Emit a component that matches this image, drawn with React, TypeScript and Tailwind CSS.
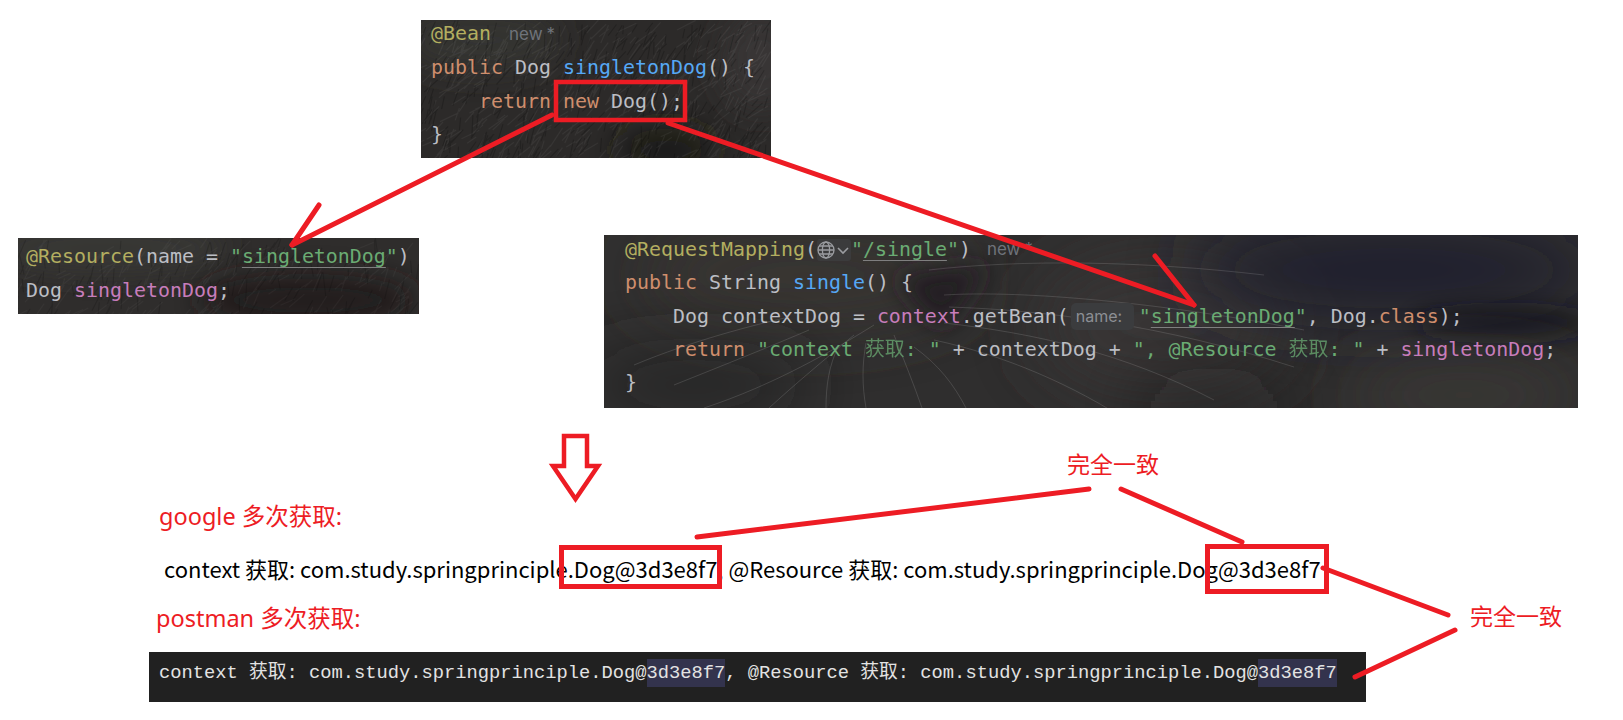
import React from 'react';

const RED = '#ed1c24';

// seeded so the fur looks the same on every load
const rng = (seed: number) => () => {
  seed = (seed * 16807) % 2147483647;
  return seed / 2147483647;
};

const Fur = ({ w, h, seed, count, angle, color, len = 16 }: { w: number; h: number; seed: number; count: number; angle: number; color: string; len?: number }) => {
  const r = rng(seed);
  const lines = Array.from({ length: count }, () => {
    const x = r() * w;
    const y = r() * h;
    const a = angle + (r() - 0.5) * 0.9;
    const l = len * (0.5 + r());
    return `M${x.toFixed(1)} ${y.toFixed(1)}l${(Math.cos(a) * l).toFixed(1)} ${(Math.sin(a) * l).toFixed(1)}`;
  });
  return <path d={lines.join('')} stroke={color} strokeWidth="1.2" fill="none" filter="url(#soft)" />;
};

const Blur = ({ id, amount }: { id: string; amount: number }) => (
  <filter id={id} filterUnits="userSpaceOnUse" x="-300" y="-300" width="1600" height="800">
    <feGaussianBlur stdDeviation={amount} />
  </filter>
);

const PanelOneBg = () => (
  <svg className="absolute inset-0 w-full h-full" viewBox="0 0 350 138" preserveAspectRatio="none">
    <defs><Blur id="b1" amount={16} /><Blur id="soft" amount={0.6} /></defs>
    <ellipse cx="245" cy="130" rx="50" ry="22" fill="#1c1a19" filter="url(#b1)" />
    <ellipse cx="340" cy="40" rx="40" ry="50" fill="#383634" filter="url(#b1)" />
    <ellipse cx="60" cy="20" rx="80" ry="30" fill="#363432" filter="url(#b1)" />
    <Fur w={350} h={138} seed={11} count={420} angle={2.3} color="rgba(255,255,255,0.05)" />
    <Fur w={350} h={138} seed={29} count={300} angle={2.0} color="rgba(0,0,0,0.2)" />
  </svg>
);

const PanelTwoBg = () => (
  <svg className="absolute inset-0 w-full h-full" viewBox="0 0 401 76" preserveAspectRatio="none">
    <defs><Blur id="b2" amount={14} /></defs>
    <ellipse cx="90" cy="10" rx="120" ry="24" fill="#393735" filter="url(#b2)" />
    <ellipse cx="290" cy="62" rx="110" ry="26" fill="#211f1e" filter="url(#b2)" />
    <Fur w={401} h={76} seed={47} count={170} angle={2.3} color="rgba(255,255,255,0.035)" />
    <Fur w={401} h={76} seed={83} count={110} angle={1.8} color="rgba(0,0,0,0.16)" />
  </svg>
);

const whiskers = [
  'M340 60C420 55 560 68 700 95',
  'M345 72C440 75 560 90 690 132',
  'M340 88C430 98 520 118 610 165',
  'M330 105C400 120 470 150 530 190',
  'M325 35C420 24 540 26 660 40',
  'M270 90C230 115 170 150 100 173',
  'M250 100C220 125 190 150 165 173',
  'M235 110C225 130 222 150 222 173',
  'M262 108C258 130 258 150 262 173',
  'M290 100C300 125 310 150 318 173',
  'M205 95C170 110 120 130 70 150',
  'M185 82C150 90 90 105 30 130',
  'M310 112C335 130 350 150 362 173',
];

const PanelThreeBg = () => (
  <svg className="absolute inset-0 w-full h-full" viewBox="0 0 974 173" preserveAspectRatio="none">
    <defs>
      <Blur id="b3" amount={34} />
      <Blur id="b3s" amount={12} />
    </defs>
    <ellipse cx="200" cy="40" rx="170" ry="50" fill="#383533" filter="url(#b3)" />
    <ellipse cx="560" cy="90" rx="130" ry="70" fill="#383634" filter="url(#b3)" />
    <ellipse cx="790" cy="35" rx="210" ry="50" fill="#20232d" filter="url(#b3)" />
    <ellipse cx="900" cy="88" rx="90" ry="12" fill="#18181a" filter="url(#b3s)" />
    <ellipse cx="860" cy="160" rx="120" ry="26" fill="#3d3a37" filter="url(#b3)" />
    <ellipse cx="610" cy="172" rx="80" ry="14" fill="#1e1d1e" filter="url(#b3)" />
    <ellipse cx="90" cy="150" rx="120" ry="30" fill="#252526" filter="url(#b3)" />
    <path d="M290 42L385 30L345 86L335 90Z" fill="#211f20" filter="url(#b3s)" />
    {whiskers.map((d) => (
      <path key={d} d={d} stroke="rgba(255,255,255,0.13)" strokeWidth="1" fill="none" />
    ))}
  </svg>
);

// jetbrains style editor colours
const A = ({ children }: { children: React.ReactNode }) => <span className="text-[#b3ae60]">{children}</span>;
const K = ({ children }: { children: React.ReactNode }) => <span className="text-[#cf8e6d]">{children}</span>;
const F = ({ children }: { children: React.ReactNode }) => <span className="text-[#56a8f5]">{children}</span>;
const S = ({ children }: { children: React.ReactNode }) => <span className="text-[#6aab73]">{children}</span>;
const V = ({ children }: { children: React.ReactNode }) => <span className="text-[#c77dbb]">{children}</span>;
const Cjk = ({ children }: { children: React.ReactNode }) => <span className="opacity-75">{children}</span>;
const U = ({ children }: { children: React.ReactNode }) => (
  <span className="underline decoration-[#7f7f7f] decoration-1 underline-offset-[4px] [text-decoration-skip-ink:none]">{children}</span>
);
const Hint = ({ children, className }: { children: React.ReactNode; className: string }) => (
  <span className={`font-['Inter',sans-serif] text-[#6f737a] text-[17px] ${className}`}>{children}</span>
);

const codeFont = "font-['DejaVu_Sans_Mono','Noto_Sans_CJK_SC',monospace] text-[19.930px] leading-[33.3px] text-[#bcbec4] whitespace-pre [font-variant-ligatures:none]";

const Highlight = ({ children }: { children: React.ReactNode }) => (
  <span className="inline-block bg-[#33334d] leading-[28px]">{children}</span>
);

const Overlay = () => (
  <svg className="absolute inset-0 pointer-events-none" width="1623" height="720" viewBox="0 0 1623 720" fill="none" stroke={RED} strokeLinecap="round">
    <rect x="556" y="82" width="129" height="38" strokeWidth="4.500" />
    <g strokeWidth="5">
      <rect x="561.500" y="547.500" width="158" height="39" />
      <rect x="1207.500" y="546.500" width="119" height="45" />
      <path d="M552 115L292 245" />
      <path d="M319 205L292 245" />
      <path d="M668 123L1194 305" />
      <path d="M1155 256L1194 305" />
      <path d="M1089 489L697 537" />
      <path d="M1121 489L1242 542" />
      <path d="M1323 568L1448 615" />
      <path d="M1455 630L1355 677" />
    </g>
    <path d="M564 436H587V466H598L575.500 499L553 466H564Z" strokeWidth="4.500" strokeLinecap="butt" fill="#fff" />
  </svg>
);

export default function App() {
  return (
    <div className="relative w-[1623px] h-[720px] overflow-hidden bg-white">
      <div className="pt-5">
        <div className={`relative ml-[421px] w-[350px] h-[138px] bg-[#2c2a29] overflow-hidden ${codeFont}`}>
          <PanelOneBg />
          <div className="relative pl-[10px] -mt-[4px]">
            <div className="pt-[1px]"><A>@Bean</A> <Hint className="ml-[6px]">new</Hint><Hint className="ml-1">*</Hint></div>
            <div><K>public</K> Dog <F>singletonDog</F>() {'{'}</div>
            <div>    <K>return</K> <K>new</K> Dog();</div>
            <div>{'}'}</div>
          </div>
        </div>

        <div className="flex items-start mt-[77px]">
          <div className={`relative mt-[3px] ml-[18px] w-[401px] h-[76px] bg-[#2f2d2c] overflow-hidden ${codeFont}`}>
            <PanelTwoBg />
            <div className="relative pl-[8px] pt-[2px] leading-[34px]">
              <div><A>@Resource</A>(name = <S>"<U>singletonDog</U>"</S>)</div>
              <div>Dog <V>singletonDog</V>;</div>
            </div>
          </div>

          <div className={`relative ml-[185px] w-[974px] h-[173px] bg-[#2f2e2e] overflow-hidden ${codeFont}`}>
            <PanelThreeBg />
            <div className="relative pl-[21px] -mt-[2px]">
              <div className="flex items-center h-[33.3px]">
                <A>@RequestMapping</A>(
                <span className="flex items-center h-[22px] w-[34px] rounded-[3px] bg-[#3b3b3c] text-[#9a9ca0]">
                  <svg width="18" height="18" viewBox="0 0 18 18" fill="none" stroke="currentColor" strokeWidth="1.3">
                    <circle cx="9" cy="9" r="8" />
                    <ellipse cx="9" cy="9" rx="3.6" ry="8" />
                    <path d="M1 9H17M2 5H16M2 13H16" />
                  </svg>
                  <svg width="16" height="16" viewBox="0 0 16 16" fill="none" stroke="currentColor" strokeWidth="1.6">
                    <path d="M3 6L8 11L13 6" />
                  </svg>
                </span>
                <S>"<U>/single</U>"</S>)
                <Hint className="ml-[16px]">new</Hint><Hint className="ml-1">*</Hint>
              </div>
              <div><K>public</K> String <F>single</F>() {'{'}</div>
              <div className="flex items-center h-[33.3px]">
                {'    Dog contextDog = '}<V>context</V>.getBean(
                <span className="ml-[2px] mr-[5px] flex items-center h-[27px] w-[63px] pl-[5px] rounded-[5px] bg-[#3b3c3e] font-['Inter',sans-serif] text-[16px] text-[#8c8f94]">name:</span>
                <S>"<U>singletonDog</U>"</S>, Dog.<K>class</K>);
              </div>
              <div>    <K>return</K> <S>"context <Cjk>获取</Cjk>: "</S> + contextDog + <S>", @Resource <Cjk>获取</Cjk>: "</S> + <V>singletonDog</V>;</div>
              <div>{'}'}</div>
            </div>
          </div>
        </div>

        <div className="mt-[92px] h-[32px] pl-[159px] text-[23.500px] leading-[32px] text-[#ed1c24] font-['Noto_Sans','Noto_Sans_CJK_SC',sans-serif]">google 多次获取:</div>
        <div className="mt-[16px] h-[40px] pl-[164px] text-[22px] leading-[40px] text-black whitespace-pre font-['Noto_Sans_CJK_SC',sans-serif]">context 获取: com.study.springprinciple.Dog@3d3e8f7, @Resource 获取: com.study.springprinciple.Dog@3d3e8f7</div>
        <div className="mt-[14px] h-[32px] pl-[156px] text-[23.500px] leading-[32px] text-[#ed1c24] font-['Noto_Sans','Noto_Sans_CJK_SC',sans-serif]">postman 多次获取:</div>
        <div className="mt-[18px] ml-[149px] w-[1217px] h-[50px] pl-[10px] pt-[7px] bg-[#212121] text-[18.750px] leading-[28px] text-[#e3e3e3] whitespace-pre font-['Liberation_Mono','Noto_Sans_CJK_SC',monospace]">
          context 获取: com.study.springprinciple.Dog@<Highlight>3d3e8f7</Highlight>, @Resource 获取: com.study.springprinciple.Dog@<Highlight>3d3e8f7</Highlight>
        </div>
      </div>

      <Overlay />
      <div className="absolute left-[1067px] top-[447px] text-[23px] leading-[32px] text-[#ed1c24] font-['Noto_Sans_CJK_SC',sans-serif]">完全一致</div>
      <div className="absolute left-[1470px] top-[599px] text-[23px] leading-[32px] text-[#ed1c24] font-['Noto_Sans_CJK_SC',sans-serif]">完全一致</div>
    </div>
  );
}
